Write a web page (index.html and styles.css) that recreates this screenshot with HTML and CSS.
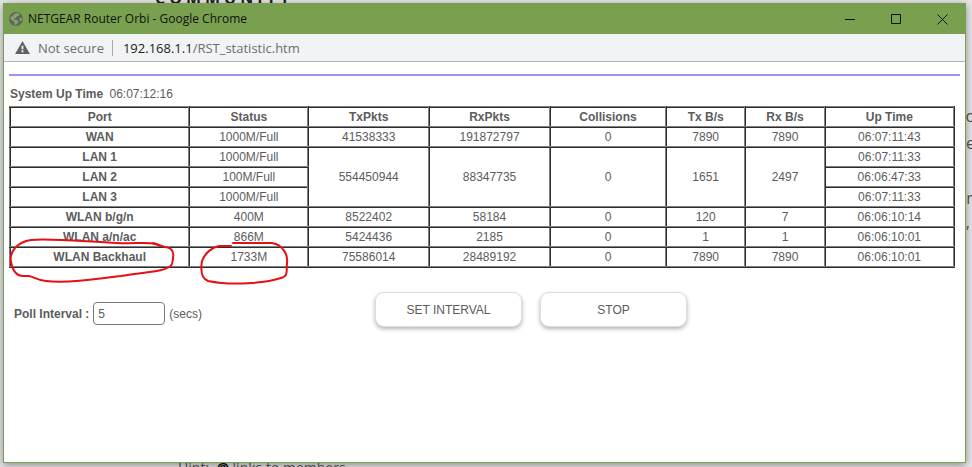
FILE: index.html
```html
<!DOCTYPE html>
<html lang="en">
<head>
<meta charset="utf-8">
<title>NETGEAR Router Orbi</title>
<link rel="stylesheet" href="styles.css">
</head>
<body>
<div class="backdrop">
  <div class="backdrop-title">COMMUNITY</div>
  <div class="backdrop-hint">Hint: &nbsp;<b>@</b> links to members</div>
  <div class="edge edge-1">o</div>
  <div class="edge edge-2">e</div>
  <div class="edge edge-3">m</div>
  <div class="edge edge-4">,</div>
</div>
<main class="window">
  <header class="titlebar">
    <svg class="globe" viewBox="0 0 16 16" aria-hidden="true"><circle cx="8" cy="8" r="7" fill="#5d6660"/><path d="M7 2.500l3-.5 1.500 1.500-1 1.500-2 .5-.5 1.500-2 .5 0 1 3 .5 1.500 1.500-1 2-2 1.500-1-.5 0-2.500-1.500-1.500-2.500-1 0-2.500 2-1zM12 7l2 0 0 2-1.500 1.500-1-1.500z" fill="#86a36a"/></svg>
    <h1 class="title">NETGEAR Router Orbi - Google Chrome</h1>
    <div class="controls">
      <button type="button" aria-label="Minimize"><svg viewBox="0 0 11 11"><path d="M0 5.5H10"/></svg></button>
      <button type="button" aria-label="Maximize"><svg viewBox="0 0 11 11"><path d="M.5.5h9v9H.5z"/></svg></button>
      <button type="button" aria-label="Close"><svg viewBox="0 0 11 11"><path d="M.5.5l10 10M10.5.5l-10 10"/></svg></button>
    </div>
  </header>
  <div class="address">
    <svg class="warn" viewBox="0 0 16 14" aria-hidden="true"><path d="M8 0l8 14H0z" fill="#5f6368"/><path d="M7 5h2v4H7zM7 10h2v2H7z" fill="#f1f3f4"/></svg>
    <span class="insecure">Not secure</span>
    <span class="url"><b>192.168.1.1</b>/RST_statistic.htm</span>
  </div>
  <section class="page">
    <hr>
    <p class="uptime"><b>System Up Time</b> <span>06:07:12:16</span></p>
    <table>
      <colgroup><col class="c-port"><col class="c-status"><col class="c-pkts"><col class="c-pkts"><col class="c-coll"><col class="c-rate"><col class="c-rate"><col class="c-time"></colgroup>
      <thead>
        <tr><th>Port</th><th>Status</th><th>TxPkts</th><th>RxPkts</th><th>Collisions</th><th>Tx B/s</th><th>Rx B/s</th><th>Up Time</th></tr>
      </thead>
      <tbody>
        <tr><th>WAN</th><td>1000M/Full</td><td>41538333</td><td>191872797</td><td>0</td><td>7890</td><td>7890</td><td>06:07:11:43</td></tr>
        <tr><th>LAN 1</th><td>1000M/Full</td><td rowspan="3">554450944</td><td rowspan="3">88347735</td><td rowspan="3">0</td><td rowspan="3">1651</td><td rowspan="3">2497</td><td>06:07:11:33</td></tr>
        <tr><th>LAN 2</th><td>100M/Full</td><td>06:06:47:33</td></tr>
        <tr><th>LAN 3</th><td>1000M/Full</td><td>06:07:11:33</td></tr>
        <tr><th>WLAN b/g/n</th><td>400M</td><td>8522402</td><td>58184</td><td>0</td><td>120</td><td>7</td><td>06:06:10:14</td></tr>
        <tr><th>WLAN a/n/ac</th><td>866M</td><td>5424436</td><td>2185</td><td>0</td><td>1</td><td>1</td><td>06:06:10:01</td></tr>
        <tr>
          <th class="marked">WLAN Backhaul<svg class="mark mark-port" viewBox="0 0 170 50" aria-hidden="true"><path d="M151 8C144 3 130 6 108 5C80 4 40 0 22 2C8 4 0 14 2 24C4 34 8 38 14 38L20 38C25 39 28 42 37 43C62 46 92 40 112 38C134 34 160 34 163 26C165 18 166 10 156 9C153 8 148 6 144 5"/></svg></th>
          <td class="marked">1733M<svg class="mark mark-status" viewBox="0 0 90 45" aria-hidden="true"><path d="M33 3H72C84 5 88 16 87 23C86 30 89 36 81 38C66 43 32 46 8 41C0 38 1 27 2 21C5 13 12 7 20 6L31 6"/></svg></td>
          <td>75586014</td><td>28489192</td><td>0</td><td>7890</td><td>7890</td><td>06:06:10:01</td>
        </tr>
      </tbody>
    </table>
    <form class="poll">
      <div class="field"><label for="interval">Poll Interval :</label><input id="interval" type="text" value="5"><span>(secs)</span></div>
      <div class="actions"><button type="button">SET INTERVAL</button><button type="button">STOP</button></div>
    </form>
  </section>
</main>
</body>
</html>
```
FILE: styles.css
```css
* { box-sizing: border-box; }
body {
  margin: 0;
  min-height: 100vh;
  display: flex;
  padding: 3px 6px 4px 3px;
  position: relative;
  overflow: hidden;
  background: #e6e6e8;
  font-family: "Liberation Sans", Arial, sans-serif;
  font-size: 12px;
  color: #5c5c5c;
}
.backdrop { position: absolute; inset: 0; overflow: hidden; font-family: "Open Sans", sans-serif; font-size: 16px; color: #555; }
.backdrop-title { position: absolute; left: 155px; top: -10px; font-size: 16px; line-height: 16px; font-weight: 700; letter-spacing: 4px; color: #222; }
.backdrop-hint { position: absolute; left: 178px; bottom: -10px; font-size: 14px; line-height: 18px; }
.backdrop-hint b { color: #000; }
.edge { position: absolute; right: -3px; line-height: 20px; }
.edge-1 { top: 106px; }
.edge-2 { top: 133px; }
.edge-3 { top: 188px; right: -9px; }
.edge-4 { top: 212px; right: 2px; }
.window {
  position: relative;
  flex: 1;
  display: flex;
  flex-direction: column;
  border: 1px solid #79a04e;
  background: #fff;
  box-shadow: 0 2px 8px rgba(0, 0, 0, .4);
}
.titlebar { display: flex; align-items: center; height: 30px; padding-left: 4px; background: #79a04e; color: #111; }
.globe { width: 16px; height: 16px; margin-right: 4px; }
.title { margin: 0; font: 12px/16px "Open Sans", sans-serif; }
.controls { display: flex; margin-left: auto; }
.controls button { width: 46px; height: 30px; padding: 0; border: 0; background: none; display: grid; place-items: center; }
.controls svg { width: 11px; height: 11px; fill: none; stroke: #111; }
.address {
  display: flex;
  align-items: center;
  height: 28px;
  padding: 0 11px;
  border-bottom: 1px solid #b6b6ba;
  background: #f1f3f4;
  font: 13px/18px "Open Sans", sans-serif;
  color: #6b6e72;
}
.warn { width: 15px; height: 13px; margin-right: 8px; }
.insecure { padding-right: 8px; margin-right: 10px; border-right: 1px solid #aaa; line-height: 16px; }
.url b { font-weight: 400; color: #222; }
.page { padding: 12px 5px; }
hr { margin: 0; border: 0; height: 2px; background: #a190ee; }
.uptime { margin: 10px 1px 4px; line-height: 16px; }
.uptime span { margin-left: 3px; }
table { width: calc(100% - 5px); table-layout: fixed; border-collapse: collapse; }
th, td { height: 20px; padding: 0; border: 2px ridge #808080; line-height: 16px; text-align: center; }
.c-port { width: 19%; }
.c-status { width: 12.6%; }
.c-pkts { width: 12.8%; }
.c-coll { width: 12.3%; }
.c-rate { width: 8.4%; }
.marked { position: relative; }
.mark { position: absolute; fill: none; stroke: #e60f14; stroke-width: 2; stroke-linecap: round; overflow: visible; z-index: 1; }
.mark-port { left: -2px; top: -10px; width: 170px; height: 50px; }
.mark-status { left: 10px; top: -8px; width: 90px; height: 45px; }
.poll { display: flex; align-items: center; margin-top: 24px; padding-left: 5px; }
.field { display: flex; align-items: center; gap: 4px; padding-top: 8px; flex: 0 0 361px; }
.field label { font-weight: 700; }
.field input { width: 72px; height: 23px; padding: 0 4px; border: 1px solid #777; border-radius: 4px; font: inherit; color: inherit; }
.actions { display: flex; gap: 18px; }
.actions button { width: 147px; height: 35px; border: 1px solid #ddd; border-radius: 9px; background: #fff; box-shadow: 0 2px 4px rgba(0, 0, 0, .3); font: inherit; color: inherit; }
```
